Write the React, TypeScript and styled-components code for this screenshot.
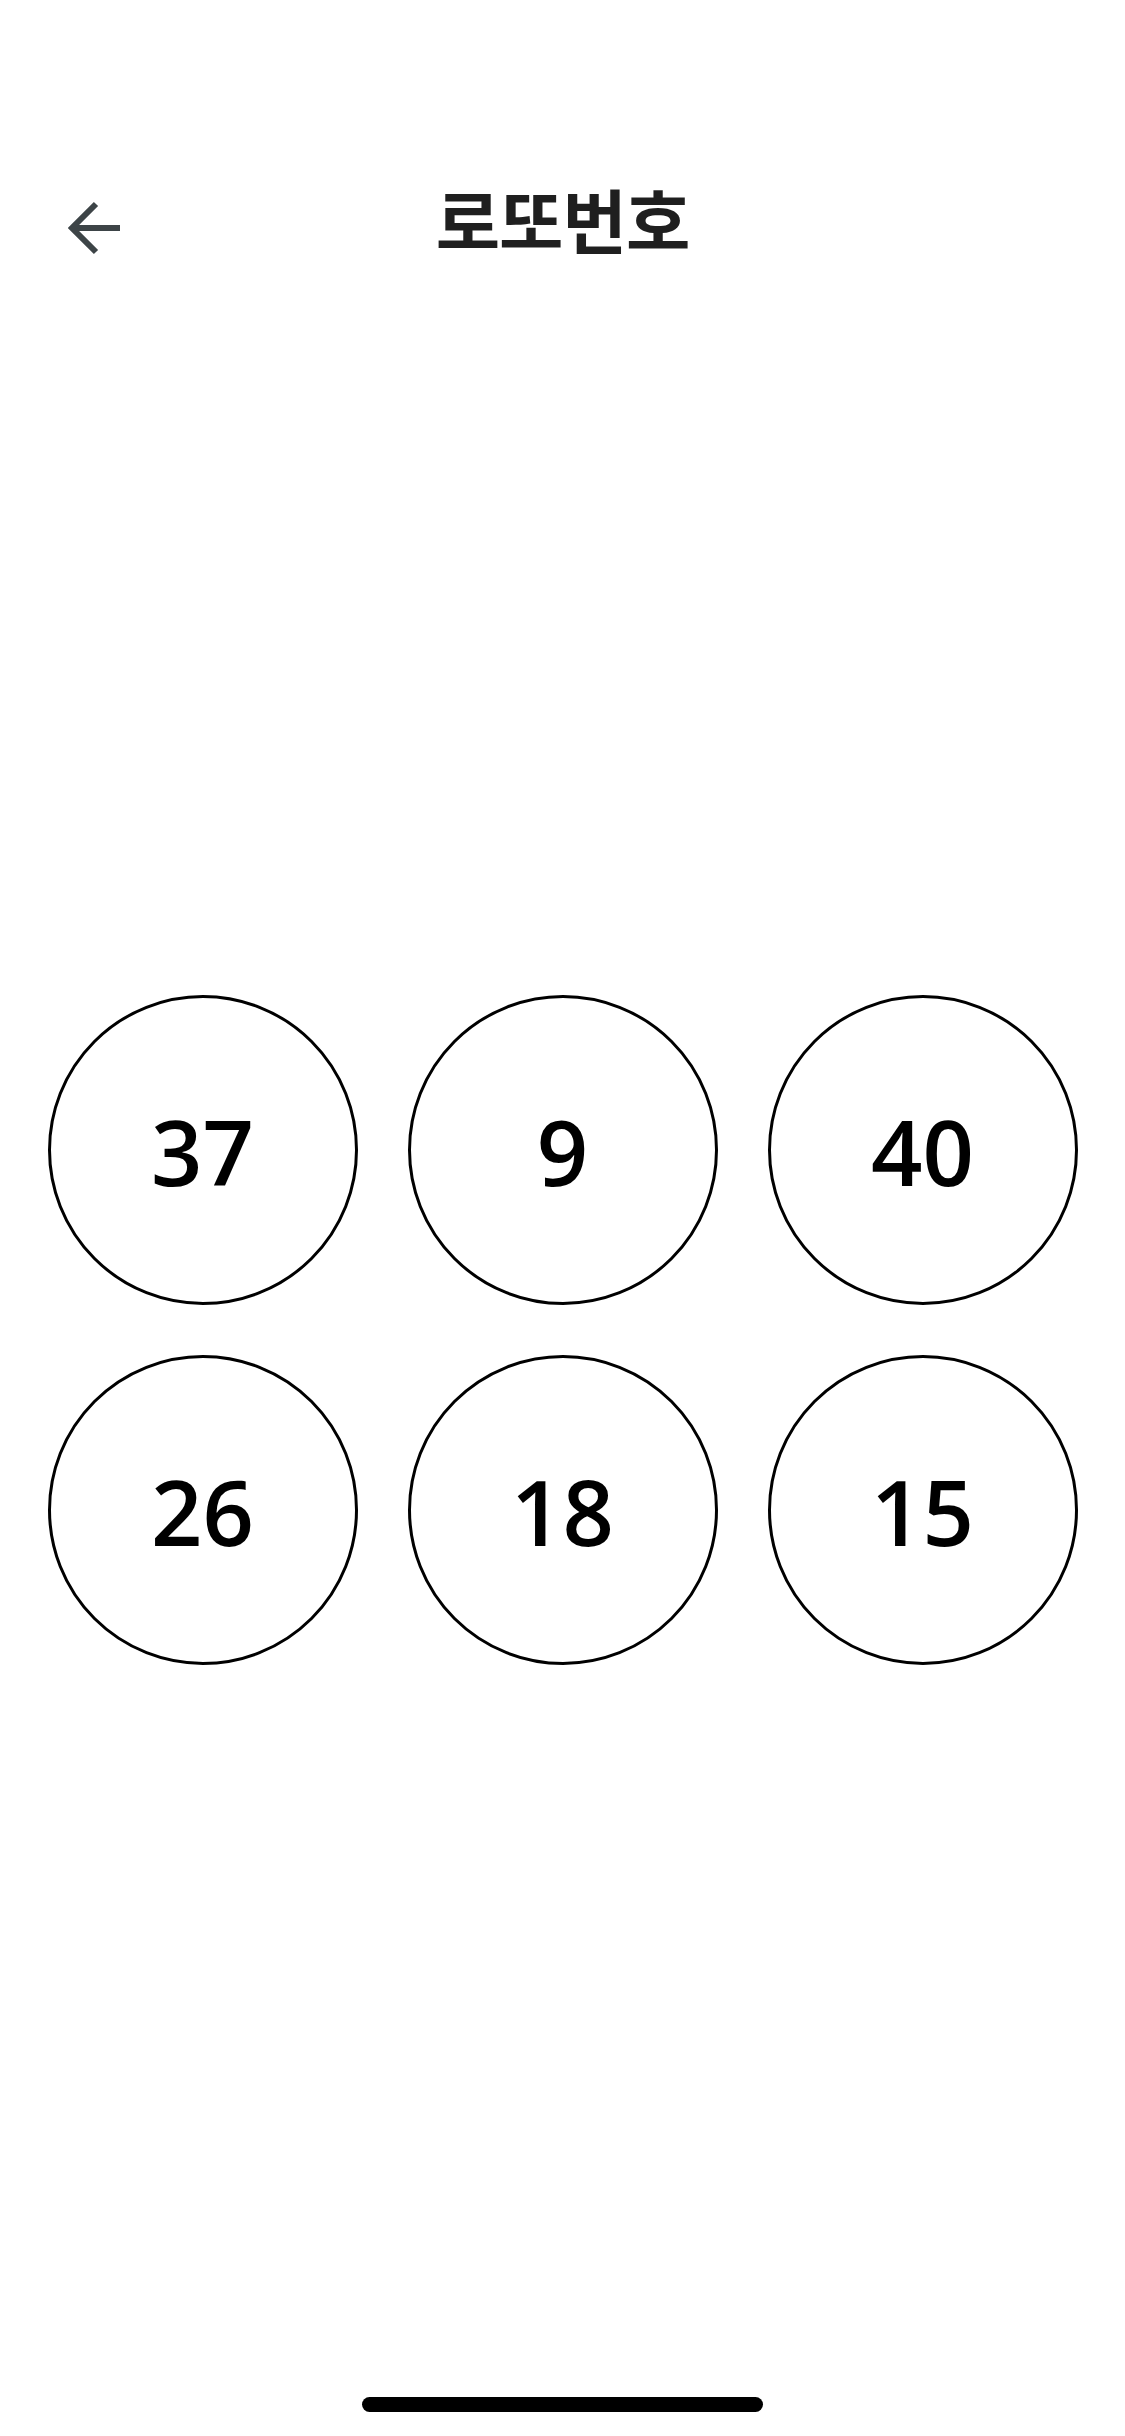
import styled, { createGlobalStyle } from "styled-components";

const GlobalStyle = createGlobalStyle`
    html, body {
        margin: 0;
        padding: 0;
        background: #ffffff;
    }
    * {
        box-sizing: border-box;
    }
`;

const Screen = styled.div`
    min-height: 100vh;
    display: flex;
    flex-direction: column;
    background: #ffffff;
    font-family: "Noto Sans", "Noto Sans CJK KR", sans-serif;
`;

const Header = styled.header`
    display: grid;
    grid-template-columns: 1fr auto 1fr;
    align-items: center;
    height: 120px;
    margin-top: 168px;
    padding: 0 68px;
`;

const BackButton = styled.button`
    justify-self: start;
    display: flex;
    align-items: center;
    justify-content: center;
    width: 56px;
    height: 56px;
    padding: 0;
    border: none;
    background: transparent;
    color: #3d4447;
    cursor: pointer;
`;

const Title = styled.h1`
    margin: 0 0 18px;
    font-family: "Noto Sans CJK KR", sans-serif;
    font-size: 70px;
    font-weight: 700;
    letter-spacing: -1px;
    line-height: 1;
    color: #1f1f1f;
`;

const Balls = styled.main`
    display: grid;
    grid-template-columns: repeat(3, 310px);
    gap: 50px;
    justify-content: center;
    margin-top: 707px;
`;

const Ball = styled.div`
    display: flex;
    align-items: center;
    justify-content: center;
    width: 310px;
    height: 310px;
    border: 3px solid #000000;
    border-radius: 50%;
    padding-top: 2px;
    font-family: "Open Sans", "Noto Sans", sans-serif;
    font-size: 90px;
    font-weight: 600;
    line-height: 1;
    color: #000000;
`;

const Spacer = styled.div`
    flex: 1;
`;

const HomeIndicator = styled.div`
    align-self: center;
    width: 401px;
    height: 15px;
    margin-bottom: 24px;
    border-radius: 8px;
    background: #000000;
`;

const numbers = [37, 9, 40, 26, 18, 15];

function BackArrow() {
    return (
        <svg width="56" height="56" viewBox="0 0 56 56" fill="none">
            <path
                d="M28 4 L4 28 L28 52 M4 28 H52"
                stroke="currentColor"
                strokeWidth="6"
                strokeLinecap="butt"
                strokeLinejoin="miter"
            />
        </svg>
    );
}

export default function App() {
    return (
        <>
            <GlobalStyle />
            <Screen>
                <Header>
                    <BackButton type="button" aria-label="뒤로">
                        <BackArrow />
                    </BackButton>
                    <Title>로또번호</Title>
                    <div />
                </Header>

                <Balls>
                    {numbers.map((n, i) => (
                        <Ball key={i}>{n}</Ball>
                    ))}
                </Balls>

                <Spacer />
                <HomeIndicator />
            </Screen>
        </>
    );
}
